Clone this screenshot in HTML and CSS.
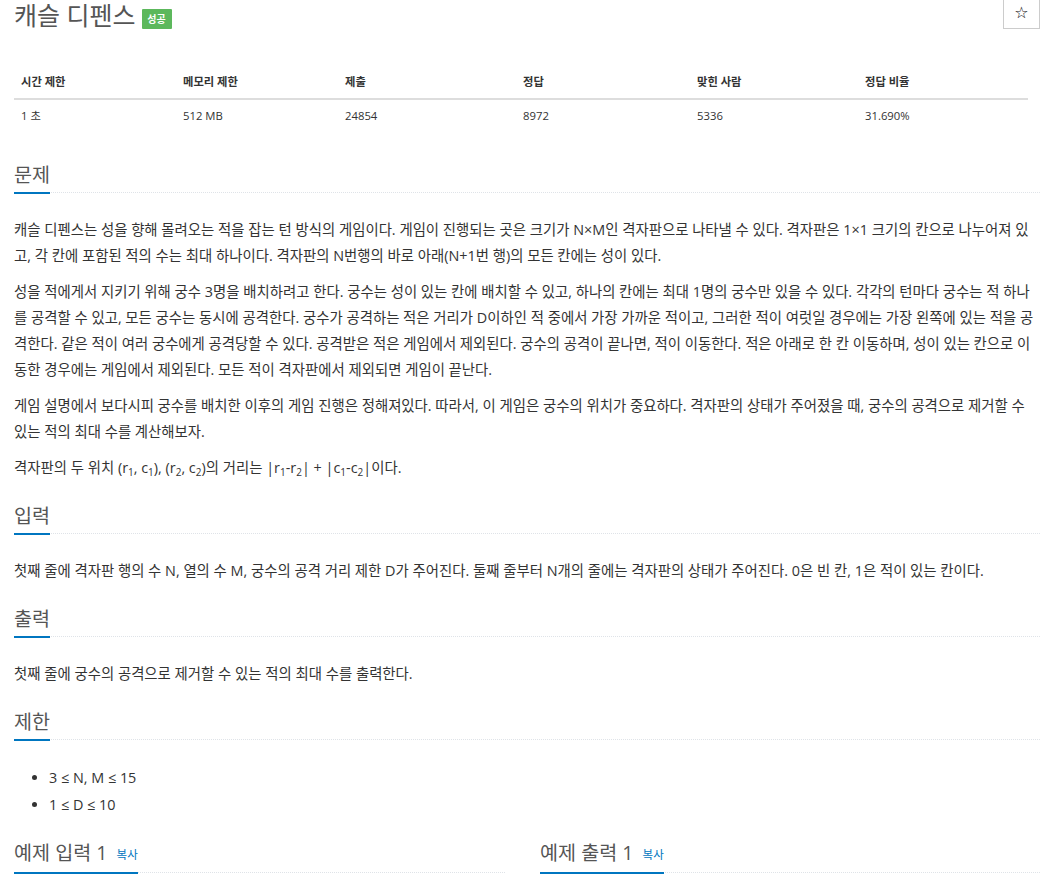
FILE: index.html
```html
<!DOCTYPE html>
<html lang="ko">
<head>
<meta charset="utf-8">
<title>캐슬 디펜스</title>
<link rel="stylesheet" href="styles.css">
</head>
<body>
<div class="page">
  <div class="page-header">
    <h1 class="title"><span class="title-text">캐슬 디펜스</span><span class="label">성공</span></h1>
    <button class="star" type="button">☆</button>
  </div>

  <table class="info">
    <thead>
      <tr><th>시간 제한</th><th>메모리 제한</th><th>제출</th><th>정답</th><th>맞힌 사람</th><th>정답 비율</th></tr>
    </thead>
    <tbody>
      <tr><td>1 초</td><td>512 MB</td><td>24854</td><td>8972</td><td>5336</td><td>31.690%</td></tr>
    </tbody>
  </table>

  <section class="section">
    <div class="headline"><h2>문제</h2></div>
    <div class="problem-text">
      <p>캐슬 디펜스는 성을 향해 몰려오는 적을 잡는 턴 방식의 게임이다. 게임이 진행되는 곳은 크기가 N×M인 격자판으로 나타낼 수 있다. 격자판은 1×1 크기의 칸으로 나누어져 있고, 각 칸에 포함된 적의 수는 최대 하나이다. 격자판의 N번행의 바로 아래(N+1번 행)의 모든 칸에는 성이 있다.</p>
      <p>성을 적에게서 지키기 위해 궁수 3명을 배치하려고 한다. 궁수는 성이 있는 칸에 배치할 수 있고, 하나의 칸에는 최대 1명의 궁수만 있을 수 있다. 각각의 턴마다 궁수는 적 하나를 공격할 수 있고, 모든 궁수는 동시에 공격한다. 궁수가 공격하는 적은 거리가 D이하인 적 중에서 가장 가까운 적이고, 그러한 적이 여럿일 경우에는 가장 왼쪽에 있는 적을 공격한다. 같은 적이 여러 궁수에게 공격당할 수 있다. 공격받은 적은 게임에서 제외된다. 궁수의 공격이 끝나면, 적이 이동한다. 적은 아래로 한 칸 이동하며, 성이 있는 칸으로 이동한 경우에는 게임에서 제외된다. 모든 적이 격자판에서 제외되면 게임이 끝난다.</p>
      <p>게임 설명에서 보다시피 궁수를 배치한 이후의 게임 진행은 정해져있다. 따라서, 이 게임은 궁수의 위치가 중요하다. 격자판의 상태가 주어졌을 때, 궁수의 공격으로 제거할 수 있는 적의 최대 수를 계산해보자.</p>
      <p>격자판의 두 위치 (r<sub>1</sub>, c<sub>1</sub>), (r<sub>2</sub>, c<sub>2</sub>)의 거리는 <span class="math">|r<sub>1</sub>-r<sub>2</sub>| + |c<sub>1</sub>-c<sub>2</sub>|</span>이다.</p>
    </div>
  </section>

  <section class="section">
    <div class="headline"><h2>입력</h2></div>
    <div class="problem-text">
      <p>첫째 줄에 격자판 행의 수 N, 열의 수 M, 궁수의 공격 거리 제한 D가 주어진다. 둘째 줄부터 N개의 줄에는 격자판의 상태가 주어진다. 0은 빈 칸, 1은 적이 있는 칸이다.</p>
    </div>
  </section>

  <section class="section">
    <div class="headline"><h2>출력</h2></div>
    <div class="problem-text">
      <p>첫째 줄에 궁수의 공격으로 제거할 수 있는 적의 최대 수를 출력한다.</p>
    </div>
  </section>

  <section class="section">
    <div class="headline"><h2>제한</h2></div>
    <div class="problem-text">
      <ul class="limits">
        <li>3 ≤ N, M ≤ 15</li>
        <li>1 ≤ D ≤ 10</li>
      </ul>
    </div>
  </section>

  <div class="samples">
    <section class="sample-col">
      <div class="headline"><h2>예제 입력 1 <a class="copy" href="#">복사</a></h2></div>
    </section>
    <section class="sample-col">
      <div class="headline"><h2>예제 출력 1 <a class="copy" href="#">복사</a></h2></div>
    </section>
  </div>
</div>
</body>
</html>
```

FILE: styles.css
```css
html, body {
  margin: 0;
  padding: 0;
  background: #fff;
}

body {
  font-family: "Open Sans", "Noto Sans CJK KR", sans-serif;
  font-size: 14.4px;
  color: #333;
}

.page {
  padding: 0 15px 0 14px;
}

.page-header {
  display: flex;
  justify-content: space-between;
  align-items: flex-start;
  height: 45px;
  margin-bottom: 21px;
}

.title {
  margin: 0;
  display: flex;
  align-items: center;
  font-size: 25px;
  font-weight: 400;
  line-height: 30px;
  color: #555;
}

.label {
  display: inline-block;
  margin-left: 6px;
  margin-top: 8px;
  width: 30px;
  height: 20px;
  line-height: 20px;
  text-align: center;
  background: #5cb85c;
  color: #fff;
  font-size: 10px;
  font-weight: 700;
  border-radius: 1px;
}

.star {
  margin-top: -4px;
  width: 37px;
  height: 33px;
  padding: 0;
  background: #fff;
  border: 1px solid #ccc;
  border-radius: 0;
  font-family: "DejaVu Sans", sans-serif;
  font-size: 16px;
  color: #111;
  line-height: 31px;
}

.info {
  width: 1014px;
  border-collapse: collapse;
  margin-bottom: 18px;
  font-size: 11.3px;
}

.info th,
.info td {
  text-align: left;
  padding: 8px 7px;
  line-height: 16px;
}

.info th {
  font-weight: 700;
  border-bottom: 2px solid #ddd;
}

.info th:nth-child(1) { width: 148px; }
.info th:nth-child(2) { width: 148px; }
.info th:nth-child(3) { width: 164px; }
.info th:nth-child(4) { width: 160px; }
.info th:nth-child(5) { width: 154px; }

.section,
.sample-col {
  display: flow-root;
}

.headline {
  display: block;
  margin: 12px 0 24px 0;
  border-bottom: 1px dotted #dfe3e8;
}

.headline h2 {
  display: inline-block;
  margin: 0 0 -2px 0;
  padding-bottom: 5px;
  font-size: 19.6px;
  font-weight: 400;
  line-height: 25px;
  color: #555;
  border-bottom: 2px solid #0076c0;
}

.problem-text p {
  margin: 0 0 10px 0;
  line-height: 26px;
}

.problem-text sub {
  font-size: 10px;
  line-height: 0;
  vertical-align: -3px;
}

.math {
  letter-spacing: 0;
}

.limits {
  margin: 0 0 10px 0;
  padding-left: 35px;
}

.limits li {
  line-height: 27px;
}

.samples {
  display: grid;
  grid-template-columns: 491px 500px;
  column-gap: 35px;
}

.copy {
  font-size: 11.5px;
  color: #0076c0;
  text-decoration: none;
  margin-left: 4px;
  vertical-align: 1px;
}
```
